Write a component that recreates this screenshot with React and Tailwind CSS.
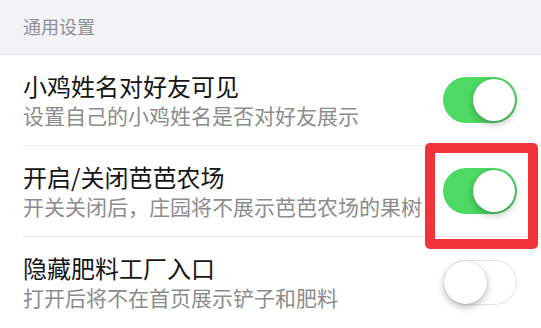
import React from "react";

const font = { fontFamily: '"Noto Sans CJK SC", "Noto Sans", sans-serif' };

function Toggle({ on }) {
  return on ? (
    <div className="flex h-[46px] w-[74px] shrink-0 items-center justify-end rounded-full bg-[#4cd964] p-[2px]">
      <div className="h-[42px] w-[42px] rounded-full bg-white shadow-[0_3px_7px_rgba(0,0,0,0.28),0_0_1px_rgba(0,0,0,0.2)]" />
    </div>
  ) : (
    <div className="flex h-[45px] w-[73px] shrink-0 items-center justify-start rounded-full border-[1.5px] border-[#e3e3e6] bg-white">
      <div className="-ml-[1px] h-[43px] w-[43px] rounded-full bg-white shadow-[0_3px_7px_rgba(0,0,0,0.28),0_0_1px_rgba(0,0,0,0.25)]" />
    </div>
  );
}

function Row({ title, sub, on, last }) {
  return (
    <div className="pl-[23px]">
      <div
        className={
          "flex h-[91px] items-center justify-between pr-[24px] " +
          (last ? "" : "border-b border-[#e6e6e8]")
        }
      >
        <div className="flex flex-col">
          <div className="text-[24px] leading-[30px] text-[#151515]">{title}</div>
          <div className="text-[21px] leading-[29px] text-[#8c8c8c]">{sub}</div>
        </div>
        <Toggle on={on} />
      </div>
    </div>
  );
}

export default function App() {
  return (
    <div className="relative h-[328px] w-[541px] overflow-hidden bg-white" style={font}>
      <div className="flex h-[55px] items-center border-b border-[#e3e3e6] bg-[#f3f3f7] pl-[23px] pb-[1px]">
        <span className="text-[18px] text-[#8e8e93]">通用设置</span>
      </div>
      <Row title="小鸡姓名对好友可见" sub="设置自己的小鸡姓名是否对好友展示" on />
      <Row title="开启/关闭芭芭农场" sub="开关关闭后，庄园将不展示芭芭农场的果树" on />
      <Row title="隐藏肥料工厂入口" sub="打开后将不在首页展示铲子和肥料" on={false} last />
      <div className="absolute left-[425px] top-[143px] h-[106px] w-[113px] rounded-[5px] border-[10px] border-[#f2343a]" />
    </div>
  );
}
